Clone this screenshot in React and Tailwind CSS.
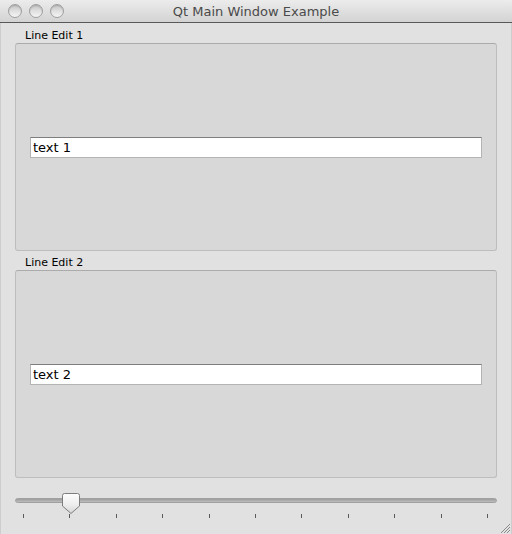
import React, { useState } from 'react';

const Light = () => (
    <div className="w-[14px] h-[14px] rounded-full border border-[#9f9f9f] bg-gradient-to-b from-[#c4c4c4] via-[#e0e0e0] to-[#f5f5f5] shadow-[inset_0_1px_1px_rgba(0,0,0,0.15)]" />
);

const GroupBox = ({ title, value, onChange }) => (
    <div className="flex flex-col">
        <div className="h-[14px] pl-[10px] text-[11px] leading-[14px] text-black">{title}</div>
        <div className="h-[208px] bg-[#d8d8d8] border border-[#bdbdbd] border-t-[#ababab] rounded-[3px] flex items-center px-[14px]">
            <input
                value={value}
                onChange={(e) => onChange(e.target.value)}
                className="w-full h-[21px] bg-white border border-[#b4b4b4] border-t-[#7e7e7e] pl-[2px] pt-[1px] text-[13px] text-black outline-none"
            />
        </div>
    </div>
);

const App = () => {
    const [text1, setText1] = useState('text 1');
    const [text2, setText2] = useState('text 2');
    const ticks = Array.from({ length: 11 }, (_, i) => i);

    return (
        <div className="w-[512px] h-[534px] bg-[#e1e1e1] flex flex-col overflow-hidden font-['Lucida_Grande','DejaVu_Sans',sans-serif]">
            {/* Title bar */}
            <div className="h-[23px] shrink-0 flex items-center px-[8px] bg-gradient-to-b from-[#ececec] to-[#d3d3d3] border-b border-[#585858] relative">
                <div className="flex gap-[7px]">
                    <Light />
                    <Light />
                    <Light />
                </div>
                <div className="absolute inset-0 flex items-center justify-center text-[13px] text-[#4a4a4a] pt-[1px]">
                    Qt Main Window Example
                </div>
            </div>

            <div className="flex-1 flex flex-col px-[14px] pt-[6px] border-x border-[#cdcdcd] relative">
                <GroupBox title="Line Edit 1" value={text1} onChange={setText1} />
                <div className="h-[5px]" />
                <GroupBox title="Line Edit 2" value={text2} onChange={setText2} />

                {/* Slider */}
                <div className="mt-[15px] relative h-[20px]">
                    <div className="absolute left-0 right-0 top-[5px] h-[5px] rounded-full bg-gradient-to-b from-[#9c9c9c] to-[#bdbdbd] border border-[#a0a0a0]" />
                    <svg className="absolute left-[47px] top-0" width="18" height="21" viewBox="0 0 18 21">
                        <defs>
                            <linearGradient id="thumb" x1="0" y1="0" x2="0" y2="1">
                                <stop offset="0" stopColor="#fdfdfd" />
                                <stop offset="0.55" stopColor="#eeeeee" />
                                <stop offset="1" stopColor="#d6d6d6" />
                            </linearGradient>
                        </defs>
                        <path d="M2.5 0.5 H15.5 Q17.5 0.5 17.5 2.5 V13 L9 20.5 L0.5 13 V2.5 Q0.5 0.5 2.5 0.5 Z" fill="url(#thumb)" stroke="#7d7d7d" />
                    </svg>
                </div>
                <div className="flex justify-between ml-[8px] mr-[9px] mt-[1px]">
                    {ticks.map((t) => (
                        <div key={t} className="w-px h-[4px] bg-[#5a5a5a]" />
                    ))}
                </div>

                {/* resize grip */}
                <svg className="absolute right-0 bottom-0" width="12" height="12" viewBox="0 0 12 12">
                    <path d="M11 2 L2 11 M11 5 L5 11 M11 8 L8 11" stroke="#8a8a8a" strokeWidth="1" />
                </svg>
            </div>
        </div>
    );
};

export default App;
